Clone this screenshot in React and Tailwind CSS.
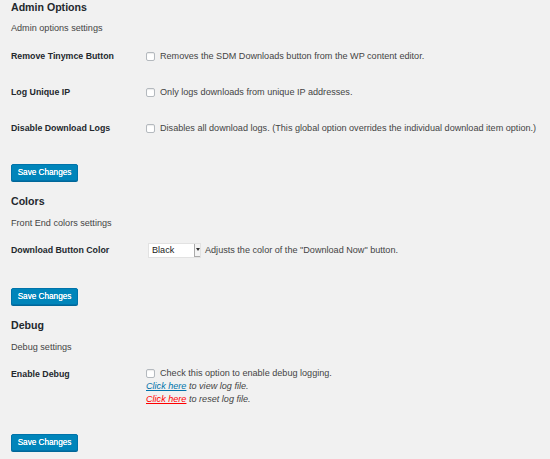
import React from "react";

function Checkbox() {
  return (
    <span className="inline-block w-[9px] h-[9px] shrink-0 rounded-[2px] border border-[#b4b9be] bg-white shadow-[inset_0_1px_1px_rgba(0,0,0,0.08)]" />
  );
}

function SaveButton({ className = "" }) {
  return (
    <button
      type="button"
      className={`block w-[67px] h-[17px] rounded-[2px] border border-[#0073aa] bg-[#0085ba] text-white text-[8.2px] leading-[15px] [text-shadow:0_0_0.3px_#fff] shadow-[0_1px_0_#006799] ${className}`}
    >
      Save Changes
    </button>
  );
}

function Row({ label, children }) {
  return (
    <div className="flex h-[36px] items-center">
      <div className="w-[135px] shrink-0 text-[8.8px] font-bold text-[#23282d]">{label}</div>
      <div className="flex items-center">{children}</div>
    </div>
  );
}

export default function App() {
  return (
    <div
      className="w-[550px] h-[459px] overflow-hidden bg-[#f1f1f1] pl-[11px] text-[9.1px] leading-[13px] text-[#444]"
      style={{ fontFamily: '"Liberation Sans", Arial, sans-serif' }}
    >
      <h2 className="text-[10.6px] leading-[14px] font-bold text-[#23282d]">Admin Options</h2>
      <p className="mt-[8px] leading-[12px]">Admin options settings</p>
      <div className="mt-[4px]">
        <Row label="Remove Tinymce Button">
          <Checkbox />
          <span className="ml-[5px]">Removes the SDM Downloads button from the WP content editor.</span>
        </Row>
        <Row label="Log Unique IP">
          <Checkbox />
          <span className="ml-[5px]">Only logs downloads from unique IP addresses.</span>
        </Row>
        <Row label="Disable Download Logs">
          <Checkbox />
          <span className="ml-[5px]">
            Disables all download logs. (This global option overrides the individual download item option.)
          </span>
        </Row>
      </div>
      <SaveButton className="mt-[18px]" />

      <h2 className="mt-[13px] text-[10.6px] leading-[14px] font-bold text-[#23282d]">Colors</h2>
      <p className="mt-[9px] leading-[12px]">Front End colors settings</p>
      <div className="mt-[3px]">
        <Row label="Download Button Color">
          <div className="ml-[2px] flex h-[15px] w-[53px] items-center justify-between border border-[#e2e2e2] bg-white">
            <span className="ml-[3px] text-[#222]">Black</span>
            <span className="flex h-[13px] w-[6px] items-center justify-center border-l border-b border-[#aaa] bg-[#f4f4f4]">
              <svg width="4" height="3" viewBox="0 0 4 3">
                <path d="M0 0 L4 0 L2 3 Z" fill="#333" />
              </svg>
            </span>
          </div>
          <span className="ml-[4px]">Adjusts the color of the "Download Now" button.</span>
        </Row>
      </div>
      <SaveButton className="mt-[20px]" />

      <h2 className="mt-[13px] text-[10.6px] leading-[14px] font-bold text-[#23282d]">Debug</h2>
      <p className="mt-[9px] leading-[12px]">Debug settings</p>
      <div className="mt-[14px] flex">
        <div className="w-[135px] shrink-0 pt-[1px] text-[8.8px] font-bold text-[#23282d]">Enable Debug</div>
        <div className="flex flex-col">
          <div className="flex h-[13px] items-center">
            <Checkbox />
            <span className="ml-[5px]">Check this option to enable debug logging.</span>
          </div>
          <div className="italic">
            <a className="text-[#0073aa] underline">Click here</a> to view log file.
          </div>
          <div className="italic">
            <a className="text-[#ff0000] underline">Click here</a> to reset log file.
          </div>
        </div>
      </div>
      <SaveButton className="mt-[28px]" />
    </div>
  );
}
